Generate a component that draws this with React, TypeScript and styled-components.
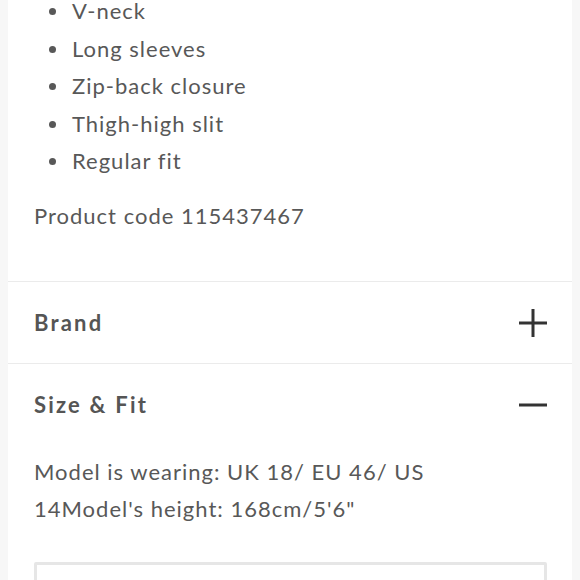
import React, { useState } from 'react';
import styled, { createGlobalStyle } from 'styled-components';

const GlobalStyle = createGlobalStyle`
  html, body {
    margin: 0;
    padding: 0;
    background: #f7f7f7;
  }
  body {
    font-family: Lato, 'Noto Sans', sans-serif;
    color: #585858;
    overflow: hidden;
  }
`;

const Page = styled.div`
  display: flex;
  justify-content: center;
  padding: 0 8px;
  height: 580px;
  overflow: hidden;
`;

const Panel = styled.div`
  flex: 1;
  background: #fff;
  display: flex;
  flex-direction: column;
`;

const Details = styled.div`
  padding: 0 25px 47px 26px;
  margin-top: -8px;
`;

const FeatureList = styled.ul`
  list-style: none;
  margin: 0;
  padding: 0;
`;

const Feature = styled.li`
  display: flex;
  align-items: center;
  font-size: 22px;
  line-height: 37.5px;
  letter-spacing: 1px;

  &::before {
    content: '';
    width: 7px;
    height: 7px;
    border-radius: 50%;
    background: #585858;
    margin: 2px 16px 0 15px;
    flex-shrink: 0;
  }
`;

const Paragraph = styled.p<{ $top?: number }>`
  margin: ${p => p.$top ?? 0}px 0 0;
  font-size: 22px;
  line-height: 37.5px;
  letter-spacing: 1px;
`;

const Section = styled.section`
  border-top: 1px solid #ebebeb;
`;

const SectionHeader = styled.button`
  display: flex;
  align-items: center;
  justify-content: space-between;
  width: 100%;
  height: 81px;
  padding: 0 25px 0 26px;
  border: none;
  background: none;
  cursor: pointer;
  font-family: inherit;
  font-size: 22px;
  font-weight: 700;
  letter-spacing: 2.2px;
  color: #555;
  text-align: left;
`;

const SectionBody = styled.div`
  padding: 8px 25px 0 26px;
`;

const SizeText = styled(Paragraph)`
  max-width: 460px;
  line-height: 37px;
`;

const GuideBox = styled.div`
  margin-top: 35px;
  height: 120px;
  border: 3px solid #e6e6e6;
  border-radius: 2px;
`;

const ToggleIcon = ({ open }: { open: boolean }) => (
  <svg width="28" height="28" viewBox="0 0 28 28" fill="none" stroke="#333" strokeWidth="3">
    <line x1="0" y1="14" x2="28" y2="14" />
    {!open && <line x1="14" y1="0" x2="14" y2="28" />}
  </svg>
);

const features = ['V-neck', 'Long sleeves', 'Zip-back closure', 'Thigh-high slit', 'Regular fit'];

const App = () => {
  const [brandOpen, setBrandOpen] = useState(false);
  const [sizeOpen, setSizeOpen] = useState(true);

  return (
    <>
      <GlobalStyle />
      <Page>
        <Panel>
          <Details>
            <FeatureList>
              {features.map(f => (
                <Feature key={f}>{f}</Feature>
              ))}
            </FeatureList>
            <Paragraph $top={17}>Product code 115437467</Paragraph>
          </Details>

          <Section>
            <SectionHeader onClick={() => setBrandOpen(!brandOpen)}>
              Brand
              <ToggleIcon open={brandOpen} />
            </SectionHeader>
          </Section>

          <Section>
            <SectionHeader onClick={() => setSizeOpen(!sizeOpen)}>
              Size &amp; Fit
              <ToggleIcon open={sizeOpen} />
            </SectionHeader>
            {sizeOpen && (
              <SectionBody>
                <SizeText>Model is wearing: UK 18/ EU 46/ US 14Model's height: 168cm/5'6"</SizeText>
                <GuideBox />
              </SectionBody>
            )}
          </Section>
        </Panel>
      </Page>
    </>
  );
};

export default App;
